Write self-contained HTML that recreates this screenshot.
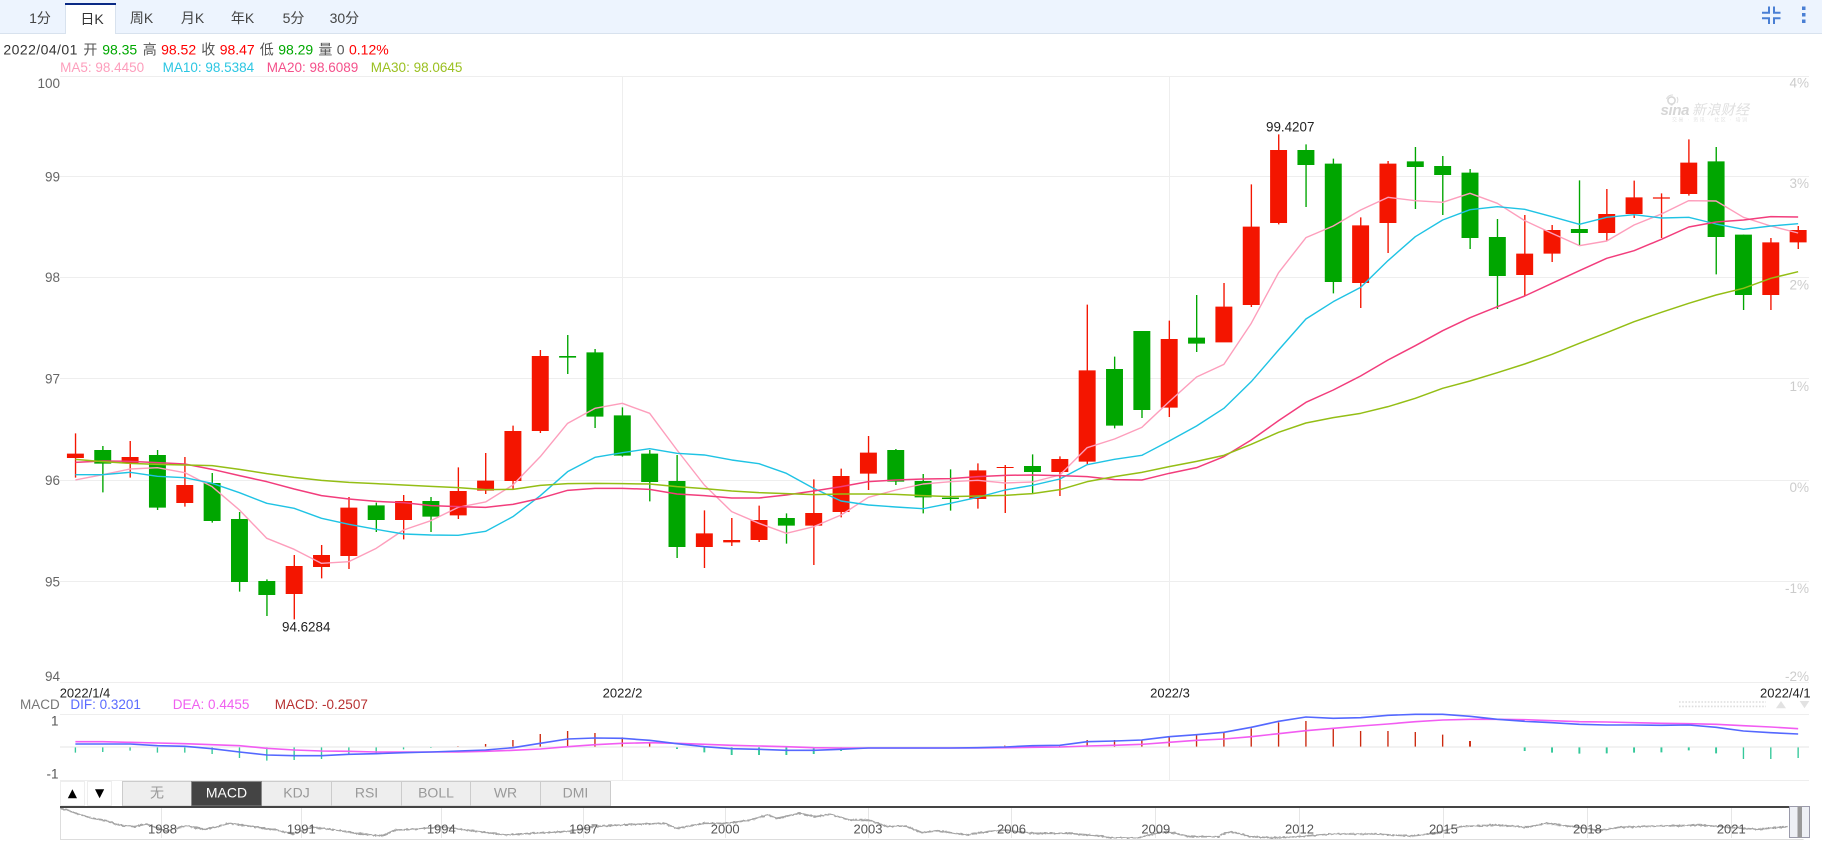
<!DOCTYPE html>
<html lang="zh">
<head>
<meta charset="utf-8">
<title>K线图</title>
<style>
html,body{margin:0;padding:0;background:#fff;width:1822px;height:866px;overflow:hidden}
svg{display:block;position:absolute;left:0;top:0}
text{font-family:"Liberation Sans","Noto Sans CJK SC",sans-serif;white-space:pre}
.ml{fill:none;stroke-linejoin:round;vector-effect:non-scaling-stroke}
.g{stroke:#eee;stroke-width:1}
.t{font-size:14px;fill:#444;text-anchor:middle}
.i{font-size:14px;fill:#555}
.r{fill:#f41500}.gr{fill:#00a600}
.m{font-size:13.5px}
.l{font-size:13.5px;fill:#666;text-anchor:end}
.p{font-size:13.5px;fill:#ccc;text-anchor:end}
.d{font-size:13px;fill:#222}
.b{font-size:14px;fill:#999;text-anchor:middle}
.y{font-size:13px;fill:#555;text-anchor:middle}
</style>
</head>
<body>
<svg width="1822" height="866" viewBox="0 0 1822 866" xmlns="http://www.w3.org/2000/svg">
<defs>
<filter id="jit" filterUnits="userSpaceOnUse" x="50" y="800" width="1760" height="50">
<feTurbulence type="fractalNoise" baseFrequency="0.35" numOctaves="2" seed="4"/>
<feDisplacementMap in="SourceGraphic" scale="2.5" xChannelSelector="R" yChannelSelector="G"/>
</filter>
<clipPath id="mc"><rect x="60" y="808" width="1730" height="30.5"/></clipPath>
</defs>

<!-- toolbar -->
<rect x="0" y="0" width="1822" height="33" fill="#edf4fe"/>
<rect x="0" y="33" width="1822" height="1" fill="#d8e2ee"/>
<rect x="65" y="3" width="51" height="31" fill="#fff"/>
<path d="M65.5 5V34M115.5 5V34" stroke="#d8e2ee" stroke-width="1" fill="none"/>
<rect x="65" y="3" width="51" height="2" fill="#0a2a85"/>
<text class="t" x="40" y="23">1分</text>
<text class="t" x="92" y="24" style="fill:#333">日K</text>
<text class="t" x="141.6" y="23">周K</text>
<text class="t" x="192.5" y="23">月K</text>
<text class="t" x="242.6" y="23">年K</text>
<text class="t" x="293.5" y="23">5分</text>
<text class="t" x="344.4" y="23">30分</text>
<path d="M1769 6.5V12.7H1762M1774 6.5V12.7H1780.5M1769 24V18.3H1762M1774 24V18.3H1780.5" fill="none" stroke="#4a7fd4" stroke-width="2"/>
<rect x="1802" y="6.5" width="3.5" height="3.5" fill="#4a7fd4"/>
<rect x="1802" y="13" width="3.5" height="3.5" fill="#4a7fd4"/>
<rect x="1802" y="19.5" width="3.5" height="3.5" fill="#4a7fd4"/>

<!-- info -->
<text class="i" x="3.4" y="54.5" textLength="74" style="fill:#333">2022/04/01</text>
<text class="i" x="83.4" y="54.5">开</text>
<text class="i" x="102.2" y="54.5" style="fill:#00a800">98.35</text>
<text class="i" x="142.7" y="54.5">高</text>
<text class="i" x="161.1" y="54.5" style="fill:#f00">98.52</text>
<text class="i" x="201.3" y="54.5">收</text>
<text class="i" x="219.7" y="54.5" style="fill:#f00">98.47</text>
<text class="i" x="259.8" y="54.5">低</text>
<text class="i" x="278.2" y="54.5" style="fill:#00a800">98.29</text>
<text class="i" x="318.4" y="54.5">量</text>
<text class="i" x="336.8" y="54.5">0</text>
<text class="i" x="349" y="54.5" style="fill:#f00">0.12%</text>
<text class="m" x="60.1" y="71.8" fill="#fd9ebc">MA5: 98.4450</text>
<text class="m" x="162.6" y="71.8" fill="#2cc6e2">MA10: 98.5384</text>
<text class="m" x="266.7" y="71.8" fill="#f4508a">MA20: 98.6089</text>
<text class="m" x="370.8" y="71.8" fill="#9bc021">MA30: 98.0645</text>

<!-- grid -->
<g class="g">
<path d="M60 76.5H1809M60 176.5H1809M60 277.5H1809M60 378.5H1809M60 480.5H1809M60 581.5H1809M60 682.5H1809M60 714.5H1809M60 780.5H1809" fill="none"/>
<path d="M622.5 77V682M1169.5 77V682M622.5 714V780M1169.5 714V780" fill="none"/>
</g>
<rect x="60" y="746" width="1749" height="2" fill="#f2f2f2"/>

<!-- axis labels -->
<text class="l" x="60" y="88">100</text>
<text class="l" x="60" y="181.3">99</text>
<text class="l" x="60" y="282">98</text>
<text class="l" x="60" y="383.6">97</text>
<text class="l" x="60" y="485">96</text>
<text class="l" x="60" y="586.5">95</text>
<text class="l" x="60" y="681">94</text>
<text class="p" x="1809" y="87.7">4%</text>
<text class="p" x="1809" y="188">3%</text>
<text class="p" x="1809" y="289.3">2%</text>
<text class="p" x="1809" y="391">1%</text>
<text class="p" x="1809" y="492">0%</text>
<text class="p" x="1809" y="593">-1%</text>
<text class="p" x="1809" y="681">-2%</text>

<!-- watermark -->
<circle cx="1671.5" cy="100.5" r="3.6" fill="none" stroke="#d8d8d8" stroke-width="1.6"/>
<path d="M1666.5 99A6 6 0 0 1 1673 95M1677 103A6 6 0 0 0 1677 97" fill="none" stroke="#dcdcdc" stroke-width="1"/>
<text x="1660.5" y="115" font-size="15" font-weight="bold" font-style="italic" fill="#d6d6d6" textLength="29">sina</text>
<text x="1692" y="114.5" font-size="14" font-style="italic" fill="#e0e0e0" textLength="57">新浪财经</text>
<text x="1672" y="121.5" font-size="5" fill="#e4e4e4" textLength="75">交易 · 资讯 · 社区 · 培训</text>

<!-- candles: x = candle index, y = zoom coords -->
<g transform="translate(75.4,300) scale(27.345,0.33333)">
<path class="r" d="M-.02 400h.05v133h-.05zM1.98 423h.05v110h-.05zM3.98 471h.05v149h-.05zM7.98 765h.05v193h-.05zM8.98 735h.05v100h-.05zM9.98 591h.05v216h-.05zM11.98 585h.05v133h-.05zM13.98 502h.05v155h-.05zM14.98 459h.05v123h-.05zM15.98 377h.05v190h-.05zM16.98 150h.05v249h-.05zM22.98 631h.05v173h-.05zM23.98 654h.05v84h-.05zM24.98 617h.05v109h-.05zM26.98 538h.05v257h-.05zM27.98 506h.05v146h-.05zM28.98 408h.05v162h-.05zM32.98 490h.05v136h-.05zM33.98 495h.05v144h-.05zM35.98 469h.05v119h-.05zM36.98 14h.05v478h-.05zM39.98 62h.05v289h-.05zM41.98 -51h.05v96h-.05zM42.98 -347h.05v368h-.05zM43.98 -497h.05v270h-.05zM46.98 -248h.05v272h-.05zM47.98 -417h.05v276h-.05zM52.98 -255h.05v242h-.05zM53.98 -225h.05v111h-.05zM55.98 -333h.05v155h-.05zM56.98 -358h.05v112h-.05zM57.98 -320h.05v134h-.05zM58.98 -482h.05v169h-.05zM61.98 -186h.05v216h-.05zM62.98 -222h.05v69h-.05z"/>
<path class="r" d="M-.31 461h.62v13h-.62zM1.69 471h.62v19h-.62zM3.69 555h.62v54h-.62zM7.69 798h.62v84h-.62zM8.69 765h.62v36h-.62zM9.69 623h.62v145h-.62zM11.69 603h.62v57h-.62zM13.69 573h.62v73h-.62zM14.69 542h.62v30h-.62zM15.69 393h.62v150h-.62zM16.69 168h.62v225h-.62zM22.69 700h.62v41h-.62zM23.69 720h.62v7h-.62zM24.69 660h.62v60h-.62zM26.69 639h.62v38h-.62zM27.69 528h.62v108h-.62zM28.69 458h.62v63h-.62zM32.69 511h.62v86h-.62zM33.69 501h.62v3h-.62zM35.69 477h.62v39h-.62zM36.69 211h.62v274h-.62zM39.69 117h.62v206h-.62zM41.69 20h.62v107h-.62zM42.69 -220h.62v235h-.62zM43.69 -450h.62v219h-.62zM46.69 -224h.62v173h-.62zM47.69 -409h.62v178h-.62zM52.69 -139h.62v64h-.62zM53.69 -210h.62v71h-.62zM55.69 -258h.62v57h-.62zM56.69 -308h.62v50h-.62zM57.69 -308h.62v4h-.62zM58.69 -412h.62v94h-.62zM61.69 -173h.62v158h-.62zM62.69 -210h.62v37h-.62z"/>
<path class="gr" d="M.98 438h.05v139h-.05zM2.98 450h.05v180h-.05zM4.98 519h.05v149h-.05zM5.98 636h.05v239h-.05zM6.98 838h.05v110h-.05zM10.98 608h.05v88h-.05zM12.98 591h.05v105h-.05zM17.98 105h.05v117h-.05zM18.98 147h.05v237h-.05zM19.98 322h.05v148h-.05zM20.98 450h.05v154h-.05zM21.98 465h.05v309h-.05zM25.98 640h.05v91h-.05zM29.98 447h.05v108h-.05zM30.98 522h.05v118h-.05zM31.98 508h.05v124h-.05zM34.98 463h.05v119h-.05zM37.98 170h.05v215h-.05zM38.98 93h.05v261h-.05zM40.98 -15h.05v171h-.05zM44.98 -467h.05v188h-.05zM45.98 -424h.05v404h-.05zM48.98 -459h.05v186h-.05zM49.98 -432h.05v177h-.05zM50.98 -393h.05v240h-.05zM51.98 -243h.05v270h-.05zM54.98 -359h.05v195h-.05zM59.98 -459h.05v382h-.05zM60.98 -196h.05v226h-.05z"/>
<path class="gr" d="M.69 450h.62v41h-.62zM2.69 465h.62v158h-.62zM4.69 549h.62v114h-.62zM5.69 657h.62v189h-.62zM6.69 843h.62v42h-.62zM10.69 616h.62v44h-.62zM12.69 603h.62v47h-.62zM17.69 168h.62v5h-.62zM18.69 157h.62v193h-.62zM19.69 346h.62v121h-.62zM20.69 461h.62v85h-.62zM21.69 543h.62v198h-.62zM25.69 654h.62v23h-.62zM29.69 450h.62v95h-.62zM30.69 543h.62v49h-.62zM31.69 593h.62v4h-.62zM34.69 498h.62v18h-.62zM37.69 207h.62v170h-.62zM38.69 93h.62v237h-.62zM40.69 113h.62v18h-.62zM44.69 -450h.62v45h-.62zM45.69 -409h.62v355h-.62zM48.69 -416h.62v17h-.62zM49.69 -402h.62v27h-.62zM50.69 -382h.62v196h-.62zM51.69 -189h.62v117h-.62zM54.69 -213h.62v12h-.62zM59.69 -416h.62v227h-.62zM60.69 -196h.62v181h-.62z"/>

<polyline class="ml" stroke="#fd9ebc" stroke-width="1.4" points="0,540 1,524 2,507 3,503 4,518 5,560 6,630 7,715 8,748 9,790 10,785 11,745 12,690 13,662 14,622 15,606 16,555 17,470 18,370 19,325 20,310 21,340 22,450 23,555 24,635 25,670 26,700 27,680 28,645 29,592 30,570 31,552 32,545 33,541 34,549 35,546 36,525 37,443 38,417 39,382 40,305 41,231 42,193 43,70 44,-82 45,-187 46,-222 47,-270 48,-308 49,-298 50,-293 51,-320 52,-290 53,-238 54,-200 55,-163 56,-177 57,-225 58,-258 59,-298 60,-297 61,-248 62,-222 63,-201"/>
<polyline class="ml" stroke="#1fc3e4" stroke-width="1.4" points="0,524 1,524 2,517 3,529 4,533 5,550 6,578 7,610 8,625 9,655 10,673 11,688 12,702 13,705 14,706 15,694 16,650 17,587 18,515 19,472 20,458 21,446 22,460 23,465 24,480 25,491 26,520 27,565 28,603 29,615 30,621 31,626 32,610 33,592 34,570 35,556 36,537 37,494 38,478 39,466 40,423 41,378 42,325 43,245 44,150 45,57 46,5 47,-38 48,-118 49,-190 50,-240 51,-271 52,-280 53,-272 54,-250 55,-227 56,-248 57,-256 58,-246 59,-248 60,-228 61,-212 62,-222 63,-229"/>
<polyline class="ml" stroke="#f23d7c" stroke-width="1.5" points="0,487 1,483 2,484 3,488 4,492 5,508 6,527 7,545 8,567 9,587 10,597 11,604 12,608 13,617 14,620 15,622 16,613 17,595 18,571 19,565 20,565 21,568 22,582 23,587 24,594 25,594 26,585 27,573 28,560 29,545 30,540 31,537 32,536 33,530 34,526 35,525 36,527 37,530 38,539 39,540 40,520 41,503 42,470 43,420 44,362 45,307 46,270 47,228 48,180 49,137 50,92 51,53 52,20 53,-12 54,-50 55,-88 56,-125 57,-148 58,-182 59,-219 60,-234 61,-240 62,-250 63,-249"/>
<polyline class="ml" stroke="#94be15" stroke-width="1.5" points="0,478 1,485 2,490 3,493 4,495 5,497 6,508 7,521 8,532 9,541 10,547 11,551 12,555 13,559 14,563 15,569 16,568 17,556 18,551 19,550 20,551 21,552 22,560 23,566 24,573 25,578 26,581 27,584 28,582 29,582 30,583 31,587 32,590 33,588 34,586 35,581 36,569 37,545 38,530 39,517 40,500 41,484 42,466 43,433 44,397 45,369 46,353 47,340 48,320 49,295 50,265 51,243 52,218 53,192 54,163 55,130 56,98 57,65 58,37 59,10 60,-15 61,-35 62,-65 63,-85"/>
</g>

<text class="d" x="1266" y="131.7" style="font-size:13.4px">99.4207</text>
<text class="d" x="282" y="631.7" style="font-size:13.4px">94.6284</text>

<!-- date labels -->
<text class="d" x="59.7" y="697.5">2022/1/4</text>
<text class="d" x="622.5" y="697.5" text-anchor="middle">2022/2</text>
<text class="d" x="1170" y="697.5" text-anchor="middle">2022/3</text>
<text class="d" x="1760" y="697.5">2022/4/1</text>

<!-- MACD head -->
<text class="m" x="20" y="708.8" fill="#777">MACD</text>
<text class="m" x="70.4" y="708.8" fill="#5a6bff">DIF: 0.3201</text>
<text class="m" x="172.8" y="708.8" fill="#f060f0">DEA: 0.4455</text>
<text class="m" x="274.8" y="708.8" fill="#b83232">MACD: -0.2507</text>
<path d="M1679 702H1766M1679 706.4H1766" stroke="#ddd" stroke-width="1.6" stroke-dasharray="1.6 1.6" fill="none"/>
<polygon points="1781,701 1786,708.3 1776,708.3" fill="#e2e2e2"/>
<polygon points="1804.5,708.3 1799.7,701 1809.3,701" fill="#e2e2e2"/>
<text class="l" x="58.5" y="725.5" style="fill:#555">1</text>
<text class="l" x="58.5" y="778.5" style="fill:#555">-1</text>

<!-- MACD panel -->
<g transform="translate(75.4,670) scale(27.345,0.33333)">
<path fill="#35c89a" d="M-.025 232h.05v16h-.05zM.975 232h.05v14h-.05zM1.975 232h.05v10h-.05zM2.975 232h.05v16h-.05zM3.975 232h.05v16h-.05zM4.975 232h.05v20h-.05zM5.975 232h.05v32h-.05zM6.975 232h.05v40h-.05zM7.975 232h.05v38h-.05zM8.975 232h.05v35h-.05zM9.975 232h.05v22h-.05zM10.975 232h.05v17h-.05zM11.975 232h.05v6h-.05zM12.975 232h.05v2h-.05zM21.965 232h.07v5h-.07zM22.965 232h.07v15h-.07zM23.965 232h.07v23h-.07zM24.965 232h.07v23h-.07zM25.965 232h.07v23h-.07zM26.965 232h.07v20h-.07zM27.965 232h.07v11h-.07zM52.965 232h.07v11h-.07zM53.965 232h.07v16h-.07zM54.965 232h.07v19h-.07zM55.965 232h.07v18h-.07zM56.965 232h.07v16h-.07zM57.965 232h.07v15h-.07zM58.965 232h.07v9h-.07zM59.965 232h.07v18h-.07zM60.975 232h.05v35h-.05zM61.975 232h.05v35h-.05zM62.975 232h.05v32h-.05z"/>
<path fill="#cc2a10" d="M13.975 228h.03v2h-.03zM14.975 222h.05v8h-.05zM15.975 210h.05v20h-.05zM16.975 192h.05v38h-.05zM17.975 183h.05v47h-.05zM18.975 189h.05v41h-.05zM19.975 202h.05v28h-.05zM20.975 216h.05v14h-.05zM33.975 226h.03v4h-.03zM34.975 226h.03v4h-.03zM35.975 226h.03v4h-.03zM36.975 210h.05v20h-.05zM37.975 210h.05v20h-.05zM38.975 210h.05v20h-.05zM39.975 199h.05v31h-.05zM40.975 194h.05v36h-.05zM41.975 189h.05v41h-.05zM42.975 175h.05v55h-.05zM43.975 157h.05v73h-.05zM44.975 153h.05v77h-.05zM45.975 173h.05v57h-.05zM46.975 183h.05v47h-.05zM47.975 183h.05v47h-.05zM48.975 186h.05v44h-.05zM49.975 194h.05v36h-.05zM50.965 213h.07v17h-.07z"/>
<polyline class="ml" stroke="#f25cf2" stroke-width="1.6" points="0,215 1,215 2,217 3,219 4,221 5,224 6,227 7,235 8,240 9,243 10,244 11,246 12,246 13,246 14,246 15,244 16,241 17,237 18,230 19,224 20,220 21,218 22,220 23,223 24,226 25,228 26,230 27,233 28,234 29,234 30,234 31,234 32,234 33,234 34,233 35,232 36,231 37,228 38,226 39,223 40,217 41,211 42,207 43,200 44,191 45,182 46,175 47,168 48,162 49,155 50,150 51,148 52,148 53,149 54,152 55,155 56,156 57,158 58,160 59,161 60,163 61,167 62,171 63,176"/>
<polyline class="ml" stroke="#5468ff" stroke-width="1.6" points="0,222 1,222 2,222 3,227 4,229 5,236 6,246 7,255 8,257 9,257 10,253 11,251 12,248 13,246 14,243 15,240 16,233 17,220 18,207 19,204 20,205 21,211 22,221 23,230 24,236 25,238 26,241 27,241 28,238 29,234 30,234 31,234 32,234 33,233 34,231 35,227 36,226 37,215 38,213 39,210 40,200 41,194 42,187 43,172 44,154 45,141 46,145 47,143 48,136 49,133 50,133 51,139 52,148 53,154 54,158 55,163 56,165 57,165 58,166 59,165 60,172 61,183 62,188 63,192"/>
</g>

<!-- indicator buttons -->
<rect x="60.5" y="781.5" width="24" height="24" fill="#fff" stroke="#eee"/>
<rect x="87.5" y="781.5" width="24" height="24" fill="#fff" stroke="#eee"/>
<polygon points="72.4,789.3 77,798.3 67.8,798.3" fill="#000"/>
<polygon points="99.6,798.3 95,789.3 104.2,789.3" fill="#000"/>
<g stroke="#ccc" fill="#eee">
<rect x="122.5" y="781.5" width="69" height="24.5"/>
<rect x="261.5" y="781.5" width="70" height="24.5"/>
<rect x="331.5" y="781.5" width="70" height="24.5"/>
<rect x="401.5" y="781.5" width="69" height="24.5"/>
<rect x="470.5" y="781.5" width="70" height="24.5"/>
<rect x="540.5" y="781.5" width="70" height="24.5"/>
</g>
<rect x="191.5" y="781.5" width="70" height="24.5" fill="#444" stroke="#888"/>
<text class="b" x="157" y="797.5">无</text>
<text class="b" x="226.5" y="797.7" style="fill:#fff">MACD</text>
<text class="b" x="296.5" y="797.7">KDJ</text>
<text class="b" x="366.5" y="797.7">RSI</text>
<text class="b" x="436" y="797.7">BOLL</text>
<text class="b" x="505.5" y="797.7">WR</text>
<text class="b" x="575.5" y="797.7">DMI</text>

<!-- range selector -->
<path d="M60.5 808V839.5H1803.5" stroke="#ddd" fill="none"/>
<path d="M161.5 808V838M301.5 808V838M441.5 808V838M583.5 808V838M725.5 808V838M868.5 808V838M1011.5 808V838M1155.5 808V838M1299.5 808V838M1443.5 808V838M1587.5 808V838M1731.5 808V838" stroke="#e6e6e6" fill="none"/>
<g filter="url(#jit)">
<g clip-path="url(#mc)">
<g transform="translate(0,670) scale(0.3954,0.33333)">
<polyline class="ml" stroke="#a4a4a4" stroke-width="1.6" points="152,415 170,420 200,433 235,445 270,452 300,465 340,470 370,462 420,483 470,468 520,478 580,460 640,470 700,480 740,492 790,472 850,480 900,490 965,498 1000,480 1050,478 1116,470 1180,480 1280,495 1340,490 1440,484 1500,470 1568,465"/>
</g>
<g transform="translate(620,670) scale(0.3827,0.33333)">
<polyline class="ml" stroke="#a4a4a4" stroke-width="1.6" points="0,465 40,463 115,460 150,475 220,460 280,460 340,450 385,435 410,445 470,430 510,440 550,433 600,450 650,450 700,470 745,468 790,488 830,482 905,495 960,485 1000,480 1080,490 1170,490 1250,497 1280,503 1350,505 1400,490 1430,485 1490,500 1568,500"/>
</g>
<g transform="translate(1220,670) scale(0.3839,0.33333)">
<polyline class="ml" stroke="#a4a4a4" stroke-width="1.6" points="0,495 30,485 80,500 130,503 180,502 290,492 400,492 500,498 560,490 625,470 720,465 800,472 850,460 920,470 990,482 1040,472 1250,465 1300,470 1400,478 1480,470"/>
</g>
</g>
</g>
<rect x="60" y="806" width="1729" height="2" fill="#444"/>
<text class="y" x="162.5" y="833.4">1988</text>
<text class="y" x="301.3" y="833.4">1991</text>
<text class="y" x="441.3" y="833.4">1994</text>
<text class="y" x="583.6" y="833.4">1997</text>
<text class="y" x="725.2" y="833.4">2000</text>
<text class="y" x="868" y="833.4">2003</text>
<text class="y" x="1011.5" y="833.4">2006</text>
<text class="y" x="1155.8" y="833.4">2009</text>
<text class="y" x="1299.5" y="833.4">2012</text>
<text class="y" x="1443.4" y="833.4">2015</text>
<text class="y" x="1587.4" y="833.4">2018</text>
<text class="y" x="1731.3" y="833.4">2021</text>
<rect x="1789.5" y="806.5" width="20" height="31" fill="#eef0f5" stroke="#9a9aaa"/>
<rect x="1797.5" y="806.5" width="4.5" height="31" fill="#999"/>
</svg>
</body>
</html>
